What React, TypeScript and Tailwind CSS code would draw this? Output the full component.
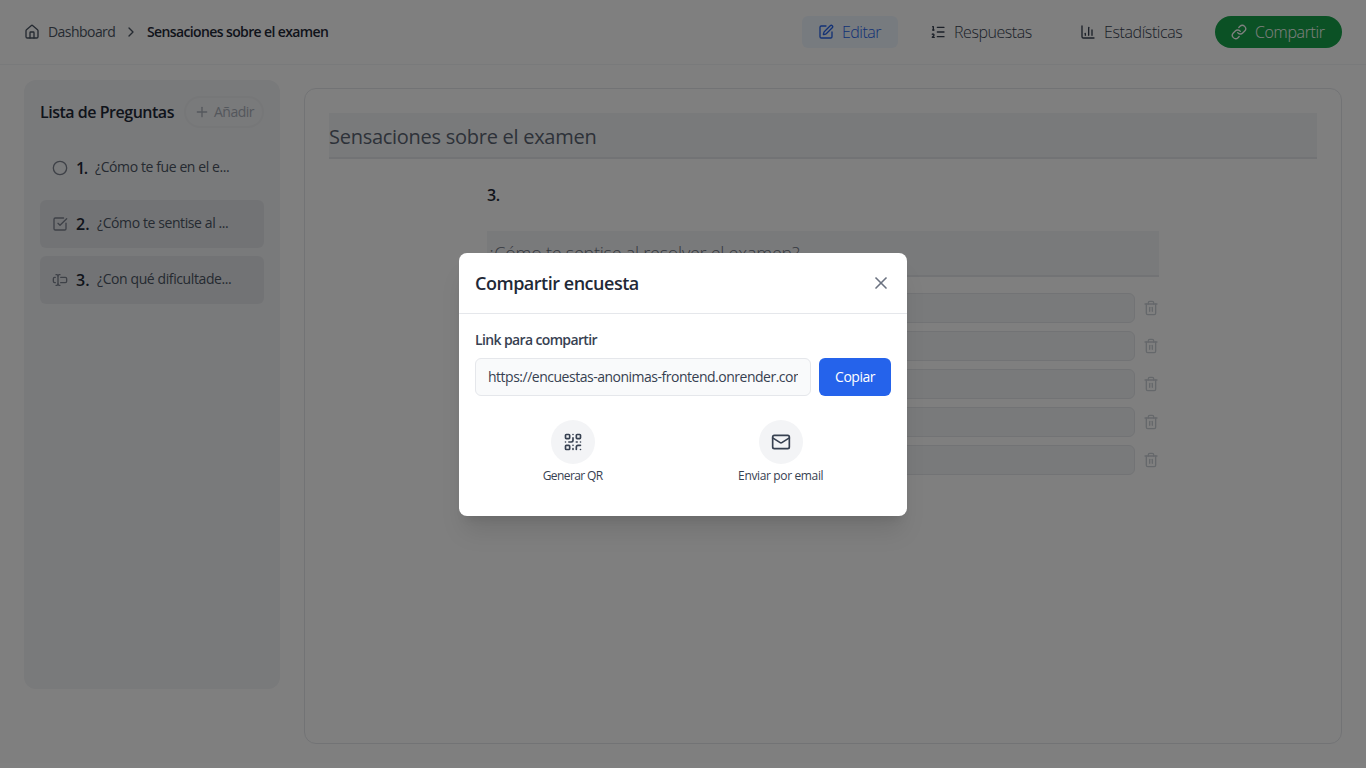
import { House, Circle, ChevronRight, ListOrdered, Link, Plus, QrCode, Mail, X, TextCursorInput, SquarePen, SquareCheckBig, ChartColumn, Trash2 } from "lucide-react";

const questions = [
  { n: "1.", text: "¿Cómo te fue en el e...", icon: Circle, box: "", numberWidth: "w-[11px] tracking-[-1.5px]" },
  { n: "2.", text: "¿Cómo te sentise al ...", icon: SquareCheckBig, box: "bg-[#e5e7eb]", numberWidth: "w-[13px]" },
  { n: "3.", text: "¿Con qué dificultade...", icon: TextCursorInput, box: "bg-[#e5e7eb]", numberWidth: "w-[13px]" },
];

export default function App() {
  return (
    <div className="relative h-[768px] w-[1366px] overflow-hidden bg-white font-['Open_Sans',sans-serif] text-[#1f2937]">
      <header className="flex h-[65px] items-center justify-between border-b border-[#f3f4f6] px-6">
        <nav className="flex items-center text-sm">
          <House size={16} className="text-[#4b5563]" />
          <span className="ml-2 w-[67px] whitespace-nowrap tracking-[-0.55px] text-[#4b5563]">Dashboard</span>
          <ChevronRight size={16} className="mx-2 text-[#4b5563]" />
          <span className="whitespace-nowrap font-semibold tracking-[-0.62px]">Sensaciones sobre el examen</span>
        </nav>
        <div className="flex items-center text-base font-light text-[#374151]">
          <div className="flex h-8 w-24 items-center gap-2 rounded-md bg-[#eff6ff] pl-4 text-[#2563eb]"><SquarePen size={16} /><span className="tracking-[-0.5px]">Editar</span></div>
          <div className="ml-4 flex h-8 w-[134px] items-center gap-2 pl-4"><ListOrdered size={16} /><span className="tracking-[-0.45px]">Respuestas</span></div>
          <div className="ml-4 flex h-8 w-[135px] items-center gap-2 pl-4"><ChartColumn size={16} /><span className="tracking-[-0.4px]">Estadísticas</span></div>
          <div className="ml-4 flex h-8 w-[127px] items-center gap-2 rounded-full bg-[#16a34a] pl-4 text-white"><Link size={16} /><span className="tracking-[-0.35px]">Compartir</span></div>
        </div>
      </header>

      <div className="flex gap-6 px-6 pt-[15px]">
        <aside className="h-[609px] w-64 rounded-xl bg-[#f3f4f6] p-4">
          <div className="flex h-8 items-center justify-between">
            <h2 className="whitespace-nowrap text-base font-semibold tracking-[-0.48px]">Lista de Preguntas</h2>
            <div className="flex h-8 w-20 items-center gap-1 rounded-full border-2 border-[#eceef1] pl-2 text-sm text-[#a9afb9]"><Plus size={16} /><span className="tracking-[-0.5px]">Añadir</span></div>
          </div>
          <ul className="mt-4 flex flex-col gap-2">
            {questions.map(({ n, text, icon: Icon, box, numberWidth }) => (
              <li key={n} className={`flex h-12 items-center rounded-md px-3 ${box}`}>
                <Icon size={16} className="text-[#7c828f]" />
                <span className={`ml-2 text-base font-semibold ${numberWidth}`}>{n}</span>
                <span className="mb-[3px] ml-2 whitespace-nowrap text-sm tracking-[-0.4px] text-[#4b5563]">{text}</span>
              </li>
            ))}
          </ul>
        </aside>

        <main className="mt-2 h-[656px] w-[1038px] rounded-xl border border-[#e5e7eb] p-6">
          <div className="flex h-[46px] items-center border-b-2 border-[#e5e7eb] bg-[#f3f4f6] pt-1 text-xl tracking-[-0.27px] text-[#5b6472]">Sensaciones sobre el examen</div>
          <section className="mx-auto w-[672px] pt-6">
            <p className="h-6 text-base font-semibold leading-6 tracking-[-0.3px]">3.</p>
            <div className="mt-6 flex h-[46px] items-center border-b-2 border-[#e5e7eb] bg-[#f3f4f6] text-lg font-light tracking-[-0.25px] text-[#6b7280]">¿Cómo te sentise al resolver el examen?</div>
            <ul className="mt-4 flex flex-col gap-2">
              {[1, 2, 3, 4, 5].map((i) => (
                <li key={i} className="flex items-center gap-2">
                  <div className="h-[30px] w-[648px] rounded-md border border-[#e5e7eb] bg-[#f3f4f6]" />
                  <Trash2 size={16} className="shrink-0 text-[#cbd0d6]" />
                </li>
              ))}
            </ul>
          </section>
        </main>
      </div>

      <div className="absolute inset-0 flex items-start justify-center bg-black/50 pt-[253px]">
        <div role="dialog" className="h-[263px] w-[448px] rounded-lg bg-white shadow-xl">
          <div className="flex h-[61px] items-center justify-between border-b border-[#e5e7eb] px-4">
            <h3 className="text-lg font-semibold tracking-[-0.48px]">Compartir encuesta</h3>
            <X size={20} className="text-[#6b7280]" />
          </div>
          <div className="px-4 pt-4">
            <p className="text-sm font-semibold leading-5 tracking-[-0.63px] text-[#374151]">Link para compartir</p>
            <div className="mt-2 flex gap-2">
              <input readOnly value="https://encuestas-anonimas-frontend.onrender.com" className="h-[38px] w-[336px] rounded-md border border-[#e5e7eb] bg-[#f9fafb] px-3 pb-0.5 text-sm tracking-[-0.49px] text-[#374151] outline-none" />
              <button className="h-[38px] w-[72px] rounded-md bg-[#2563eb] text-sm tracking-[-0.5px] text-white">Copiar</button>
            </div>
            <div className="mt-6 flex justify-around text-xs text-[#374151]">
              <div className="flex flex-col items-center gap-1"><span className="flex size-11 items-center justify-center rounded-full bg-[#f3f4f6]"><QrCode size={20} /></span><span className="tracking-[-0.6px]">Generar QR</span></div>
              <div className="flex flex-col items-center gap-1"><span className="flex size-11 items-center justify-center rounded-full bg-[#f3f4f6]"><Mail size={20} /></span><span className="tracking-[-0.36px]">Enviar por email</span></div>
            </div>
          </div>
        </div>
      </div>
    </div>
  );
}
